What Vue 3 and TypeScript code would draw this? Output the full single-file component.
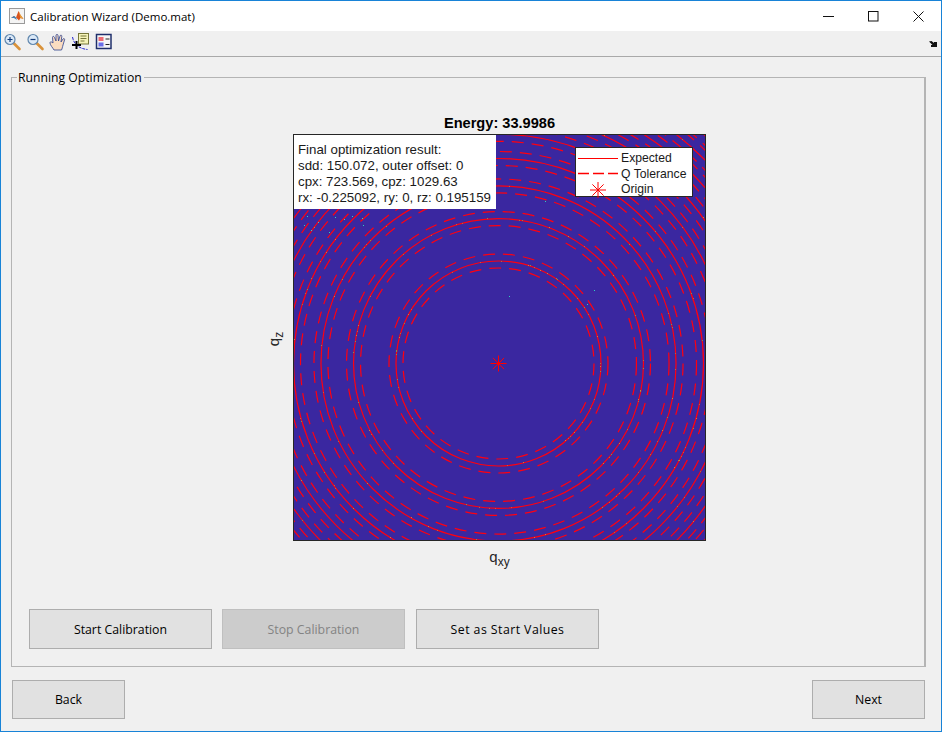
<template>
  <div class="window">
    <header class="titlebar">
      <svg class="app-icon" width="16" height="16" viewBox="0 0 16 16">
        <rect x="0.5" y="0.5" width="15" height="15" fill="#f4f4f4" stroke="#9a9a9a" />
        <path d="M2 10l3-2 2 1.500L9.500 3l2 4 3 4-3-1-1.500 2.500-3-3-2-.5z" fill="#d9541e" />
        <path d="M2 10l3-2 2 1.500 1 2.500-3-2z" fill="#3f7fb5" />
        <path d="M9.500 3l2 4 3 4-3-1z" fill="#e8a33a" />
      </svg>
      <span class="title-text">Calibration Wizard (Demo.mat)</span>
      <div class="win-controls">
        <svg width="11" height="11" viewBox="0 0 11 11"><path d="M0 5.500h11" stroke="#111" fill="none" /></svg>
        <svg width="11" height="11" viewBox="0 0 11 11"><rect x="0.500" y="0.500" width="9.500" height="9.500" stroke="#111" fill="none" /></svg>
        <svg width="11" height="11" viewBox="0 0 11 11"><path d="M0.500 0.500l10 10M10.500 0.500l-10 10" stroke="#111" fill="none" /></svg>
      </div>
    </header>

    <div class="toolbar">
      <svg width="18" height="18" viewBox="0 0 18 18">
        <path d="M10 10.500l5.500 5.500" stroke="#d9923a" stroke-width="2.600" stroke-linecap="round" />
        <circle cx="6" cy="6.500" r="5" fill="#dbe9f7" stroke="#5f86ad" stroke-width="1.200" />
        <path d="M3.500 6.500h5M6 4v5" stroke="#123a7a" stroke-width="1.200" />
      </svg>
      <svg width="18" height="18" viewBox="0 0 18 18">
        <path d="M10 10.500l5.500 5.500" stroke="#d9923a" stroke-width="2.600" stroke-linecap="round" />
        <circle cx="6" cy="6.500" r="5" fill="#dbe9f7" stroke="#5f86ad" stroke-width="1.200" />
        <path d="M3.500 6.500h5" stroke="#123a7a" stroke-width="1.200" />
      </svg>
      <svg width="18" height="18" viewBox="0 0 18 18">
        <path d="M5 17c-1-2-4-5-4-7s2-1 3 0L3.500 4.500c0-1.500 1.500-1.500 2 0L7 8 7 2.500c0-1.500 2-1.500 2 0L9.500 8l1.500-5c.5-1.500 2-1 1.800.5L12 9l2-3c1-1 2 0 1.500 1L14 12c-.5 2-1 4-1.500 5z" fill="#fbdcc0" stroke="#2b3f8c" stroke-width="0.800" />
      </svg>
      <svg width="18" height="18" viewBox="0 0 18 18">
        <rect x="6.500" y="0.500" width="10" height="10.500" fill="#f5f3b8" stroke="#77773a" />
        <path d="M8.500 3h6M8.500 5.500h6M8.500 8h4" stroke="#77773a" />
        <path d="M0.500 4c1 6 5 11.500 15 12.500" stroke="#2222cc" fill="none" stroke-dasharray="3 1" />
        <path d="M0 12h9M4.500 8v8" stroke="#000" stroke-width="2" />
      </svg>
      <svg width="18" height="18" viewBox="0 0 18 18">
        <rect x="1.500" y="1.500" width="14.500" height="14" fill="#f6f6f6" stroke="#1f2f6b" stroke-width="1.500" />
        <rect x="3.500" y="4" width="5" height="4" fill="#ee6a72" />
        <rect x="3.500" y="9.500" width="5" height="4" fill="#6a6ee8" />
        <path d="M10.500 6h4M10.500 11.500h4" stroke="#222" />
      </svg>
      <svg class="dock" width="8" height="6" viewBox="0 0 8 6">
        <path d="M0 0.500L2.500 0 5 2V1h3v5H2V4h1.500z" fill="#111" />
      </svg>
    </div>

    <main class="content">
      <fieldset class="panel">
        <legend>Running Optimization</legend>
        <div class="figure">
          <div class="plot-title">Energy: 33.9986</div>
          <div class="axes">
            <svg class="heatmap" width="411" height="405" viewBox="294 135 411 405">
              <rect x="294" y="135" width="411" height="405" fill="#3a27a0" />
              <circle
                v-for="r in radii"
                :key="r"
                :cx="cx"
                :cy="cy"
                :r="r"
                class="ring"
              />
              <template v-for="r in radii" :key="'t' + r">
                <circle :cx="cx" :cy="cy" :r="r - tol" class="ring-dash" />
                <circle :cx="cx" :cy="cy" :r="r + tol" class="ring-dash" />
              </template>
              <rect
                v-for="(s, i) in specks"
                :key="i"
                :x="s.x"
                :y="s.y"
                width="1"
                height="1"
                :fill="s.color"
              />
              <path :d="starPath(cx, cy, 8)" stroke="#ff0000" stroke-width="1" fill="none" />
            </svg>
            <div class="result-box">
              <div>Final optimization result:</div>
              <div>sdd: 150.072, outer offset: 0</div>
              <div>cpx: 723.569, cpz: 1029.63</div>
              <div>rx: -0.225092, ry: 0, rz: 0.195159</div>
            </div>
            <div class="legend-box">
              <div class="legend-row">
                <svg width="40" height="10" viewBox="0 0 40 10"><path d="M0 4.500h40" stroke="#f00" /></svg>
                <span>Expected</span>
              </div>
              <div class="legend-row">
                <svg width="40" height="10" viewBox="0 0 40 10"><path d="M0 4.500h11M15 4.500h11M30 4.500h10" stroke="#f00" stroke-width="1.500" fill="none" /></svg>
                <span>Q Tolerance</span>
              </div>
              <div class="legend-row">
                <svg width="40" height="16" viewBox="0 0 40 16"><path :d="starPath(20, 8, 8)" stroke="#f00" fill="none" /></svg>
                <span>Origin</span>
              </div>
            </div>
            <div class="ylabel">q<sub>z</sub></div>
          </div>
          <div class="xlabel">q<sub>xy</sub></div>
        </div>
        <div class="run-buttons">
          <button class="btn">Start Calibration</button>
          <button class="btn" disabled>Stop Calibration</button>
          <button class="btn btn-wide">Set as Start Values</button>
        </div>
      </fieldset>
      <div class="nav-buttons">
        <button class="btn nav">Back</button>
        <button class="btn nav">Next</button>
      </div>
    </main>
  </div>
</template>

<script setup lang="ts">
const cx = 498.5
const cy = 363.5
const tol = 7
const radii = Array.from({ length: 12 }, (_, i) => 102.5 * Math.sqrt(i + 1))

function starPath(x: number, y: number, s: number) {
  const d = s * 0.7
  return `M${x - s} ${y}H${x + s}M${x} ${y - s}V${y + s}M${x - d} ${y - d}L${x + d} ${y + d}M${x - d} ${y + d}L${x + d} ${y - d}`
}

// small noise on the rings, seeded so the picture stays the same
let seed = 17
function rnd() {
  seed = (seed * 16807) % 2147483647
  return seed / 2147483647
}

const specks: { x: number; y: number; color: string }[] = []
const speckColors = ['#a8703c', '#c0603a', '#7f9050', '#c8803a']
for (const r of radii) {
  for (let i = 0; i < 40; i++) {
    const a = rnd() * Math.PI * 2
    specks.push({
      x: Math.round(cx - 0.5 + r * Math.cos(a)),
      y: Math.round(cy - 0.5 + r * Math.sin(a)),
      color: speckColors[i % 4],
    })
  }
}
const strays = [
  [509, 296], [594, 290], [587, 304], [545, 201], [307, 216], [318, 222], [311, 230],
  [335, 217], [344, 219], [352, 216], [362, 218], [363, 225], [320, 208], [304, 225], [329, 232],
]
for (const [x, y] of strays) specks.push({ x, y, color: '#2fd0c0' })
</script>

<style>
html, body { margin: 0; padding: 0; background: #f0f0f0; }
</style>

<style scoped>
.window {
  width: 942px;
  height: 732px;
  box-sizing: border-box;
  border: 1px solid #1883d7;
  display: flex;
  flex-direction: column;
  background: #f0f0f0;
  font-family: "Open Sans", "Liberation Sans", sans-serif;
  color: #000;
  overflow: hidden;
}

.titlebar {
  height: 30px;
  background: #fff;
  display: flex;
  align-items: center;
  padding-left: 8px;
  flex: none;
}
.app-icon { margin-right: 5px; }
.title-text { font-size: 11.5px; }
.win-controls {
  margin-left: auto;
  display: flex;
  gap: 34px;
  padding-right: 17px;
}

.toolbar {
  height: 26px;
  flex: none;
  box-sizing: border-box;
  border-bottom: 1px solid #a9a9a9;
  display: flex;
  align-items: flex-start;
  gap: 4.700px;
  padding: 2px 0 0 3px;
  position: relative;
}
.dock { position: absolute; right: 4px; top: 10px; }

.content {
  flex: 1;
  display: flex;
  flex-direction: column;
  padding: 0 15px 0 10px;
  min-height: 0;
}

.panel {
  margin: 12px 0 0;
  height: 598px;
  box-sizing: border-box;
  border: 1px solid #b4b4b4;
  border-width: 1px 2px 1px 1px;
  padding: 0;
  display: flex;
  flex-direction: column;
  align-items: stretch;
  min-width: 0;
}
.panel legend {
  font-size: 12.2px;
  margin-left: 5px;
  padding: 0 2px 0 1px;
  line-height: 17px;
}

.figure {
  display: flex;
  flex-direction: column;
  align-items: center;
  margin-top: 28px;
  margin-left: 63px;
}
.plot-title {
  font: bold 14.6px/18px "Liberation Sans", sans-serif;
  height: 20px;
}
.axes {
  width: 413px;
  height: 407px;
  box-sizing: border-box;
  border: 1px solid #262626;
  position: relative;
}
.heatmap { display: block; }
.ring { fill: none; stroke: #ff0010; stroke-width: 1.2; }
.ring-dash { fill: none; stroke: #ff0010; stroke-width: 1.2; stroke-dasharray: 12 8; }

.result-box {
  position: absolute;
  left: 0;
  top: 0;
  width: 202px;
  height: 74px;
  box-sizing: border-box;
  background: #fff;
  padding: 7px 0 0 4px;
  font: 13.3px/16px "Liberation Sans", sans-serif;
  color: #1a1a1a;
  white-space: nowrap;
}

.legend-box {
  position: absolute;
  left: 281px;
  top: 12px;
  width: 118px;
  height: 50px;
  box-sizing: border-box;
  background: #fff;
  border: 1px solid #262626;
  padding: 3px 0 0 2px;
  font: 12.2px/15px "Liberation Sans", sans-serif;
  color: #1a1a1a;
}
.legend-row {
  display: flex;
  align-items: center;
  gap: 3px;
  height: 15.500px;
  white-space: nowrap;
}

.ylabel {
  position: absolute;
  left: -27px;
  top: 195px;
  transform: rotate(-90deg);
  font: 15px/18px "Liberation Sans", sans-serif;
  color: #262626;
}
.xlabel {
  margin-top: 7px;
  font: 15px/18px "Liberation Sans", sans-serif;
  color: #262626;
}
sub { font-size: 12px; line-height: 0; vertical-align: -4px; }

.run-buttons {
  display: flex;
  gap: 10px;
  margin: 43px 0 0 17px;
}

.btn {
  width: 183px;
  height: 40px;
  box-sizing: border-box;
  background: #e1e1e1;
  border: 1px solid #adadad;
  font-family: "Open Sans", "Liberation Sans", sans-serif;
  font-size: 12.3px;
  color: #000;
  padding: 0;
}
.btn:disabled {
  background: #cccccc;
  border-color: #bfbfbf;
  color: #838383;
}
.btn-wide { margin-left: 1px; letter-spacing: 0.45px; }

.nav-buttons {
  display: flex;
  justify-content: space-between;
  margin: 13px 1px 0;
}
.nav { width: 113px; height: 39px; }
</style>
